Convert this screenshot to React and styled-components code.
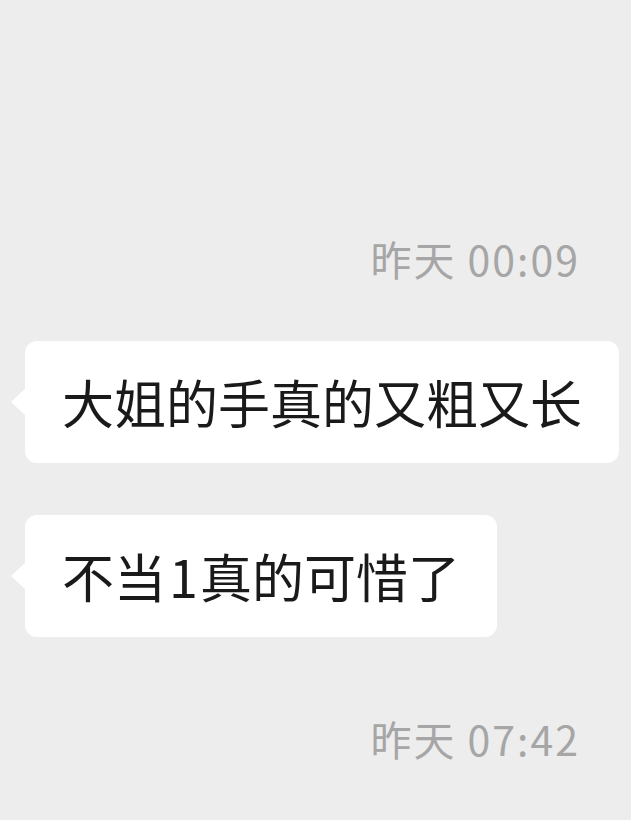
import { createGlobalStyle, styled } from "styled-components";

const GlobalStyle = createGlobalStyle`
  html, body {
    margin: 0;
    padding: 0;
    background: #ededed;
  }
  body {
    font-family: "Noto Sans CJK SC", "Noto Sans", sans-serif;
  }
`;

function App() {
  return (
    <Wrapper>
      <GlobalStyle />
      <Time $gap={59}>昨天 00:09</Time>
      <Row>
        <Bubble>大姐的手真的又粗又长</Bubble>
      </Row>
      <Row>
        <Bubble>
          不当<Digit>1</Digit>真的可惜了
        </Bubble>
      </Row>
      <Time $top={25}>昨天 07:42</Time>
    </Wrapper>
  );
}

const Wrapper = styled.div`
  width: 631px;
  height: 820px;
  background: #ededed;
  overflow: hidden;
  padding-top: 234px;
  box-sizing: border-box;
  display: flex;
  flex-direction: column;
`;

const Time = styled.div`
  display: flex;
  justify-content: flex-end;
  padding-right: 51px;
  margin-top: ${(p) => p.$top || 0}px;
  margin-bottom: ${(p) => p.$gap || 0}px;
  font-size: 41px;
  line-height: 48px;
  letter-spacing: 2px;
  color: #a6a6a6;
  white-space: pre;
`;

const Row = styled.div`
  display: flex;
  padding-left: 25px;
  margin-bottom: 52px;
`;

const Bubble = styled.div`
  position: relative;
  background: #fff;
  border-radius: 12px;
  padding: 28px 37px;
  font-size: 52px;
  line-height: 66px;
  color: #1a1a1a;
  white-space: nowrap;

  &::before {
    content: "";
    position: absolute;
    left: -14px;
    top: 50%;
    margin-top: -14px;
    width: 0;
    height: 0;
    border-top: 14px solid transparent;
    border-bottom: 14px solid transparent;
    border-right: 15px solid #fff;
  }
`;

const Digit = styled.span`
  padding: 0 2px 0 3px;
`;

export default App;
